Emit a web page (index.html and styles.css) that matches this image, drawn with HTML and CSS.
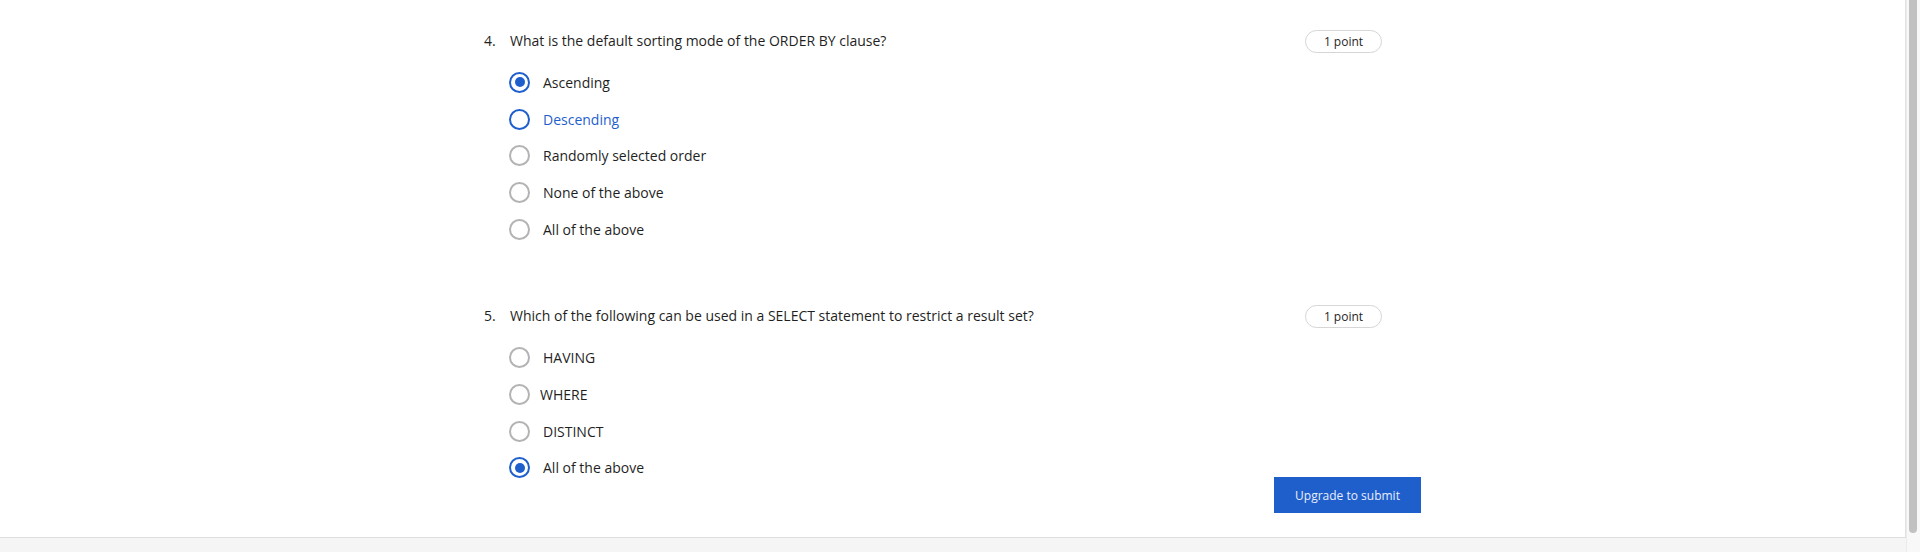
FILE: index.html
```html
<!DOCTYPE html>
<html lang="en">
<head>
<meta charset="utf-8">
<title>Quiz</title>
<link rel="stylesheet" href="styles.css">
</head>
<body>
<div class="viewport">
  <div class="main">
    <div class="panel">
      <div class="content">
        <section class="question q4">
          <div class="q-head">
            <span class="q-num">4.</span>
            <span class="q-text">What is the default sorting mode of the ORDER BY clause?</span>
            <span class="badge">1 point</span>
          </div>
          <ul class="options">
            <li class="option"><span class="radio checked"></span><span class="label">Ascending</span></li>
            <li class="option hover"><span class="radio"></span><span class="label">Descending</span></li>
            <li class="option"><span class="radio"></span><span class="label">Randomly selected order</span></li>
            <li class="option"><span class="radio"></span><span class="label">None of the above</span></li>
            <li class="option"><span class="radio"></span><span class="label">All of the above</span></li>
          </ul>
        </section>
        <section class="question q5">
          <div class="q-head">
            <span class="q-num">5.</span>
            <span class="q-text">Which of the following can be used in a SELECT statement to restrict a result set?</span>
            <span class="badge">1 point</span>
          </div>
          <div class="q-body">
            <ul class="options">
              <li class="option"><span class="radio"></span><span class="label">HAVING</span></li>
              <li class="option"><span class="radio"></span><span class="label tight">WHERE</span></li>
              <li class="option"><span class="radio"></span><span class="label">DISTINCT</span></li>
              <li class="option"><span class="radio checked"></span><span class="label">All of the above</span></li>
            </ul>
            <button class="submit" type="button">Upgrade to submit</button>
          </div>
        </section>
      </div>
    </div>
  </div>
  <div class="scrollbar"><div class="thumb"></div></div>
</div>
</body>
</html>
```

FILE: styles.css
```css
* { box-sizing: border-box; }
html, body { margin: 0; padding: 0; }
body {
  font-family: "Open Sans", "Noto Sans", sans-serif;
  color: #1f1f1f;
  background: #f5f5f5;
  width: 1920px;
  height: 552px;
  overflow: hidden;
}
.viewport {
  display: flex;
  height: 552px;
}
.main {
  flex: 1;
  display: flex;
  flex-direction: column;
  background: #f5f5f5;
}
.panel {
  height: 538px;
  background: #fff;
  border-right: 1px solid #e2e2e2;
  border-bottom: 1px solid #dedede;
}
.content {
  margin-left: 484px;
  width: 937px;
  padding-top: 31px;
}
.q-head {
  display: flex;
  align-items: center;
  height: 20px;
  font-size: 14px;
  line-height: 20px;
}
.q-num { width: 26px; }
.q-text { flex: 1; }
.badge {
  width: 77px;
  height: 23px;
  margin-right: 39px;
  border: 1px solid #d6d6d6;
  border-radius: 12px;
  font-size: 12px;
  line-height: 21px;
  text-align: center;
  color: #1f1f1f;
}
.options {
  list-style: none;
  margin: 0;
  padding: 0 0 0 25px;
}
.q4 .options { padding-top: 13px; }
.option {
  display: flex;
  align-items: center;
  height: 36.7px;
  font-size: 14px;
}
.radio {
  width: 21px;
  height: 21px;
  border: 2px solid #b3b3b3;
  border-radius: 50%;
  flex: none;
  display: flex;
  align-items: center;
  justify-content: center;
}
.radio.checked, .option.hover .radio {
  border-color: #1f5fcc;
}
.radio.checked::after {
  content: "";
  width: 10px;
  height: 10px;
  border-radius: 50%;
  background: #1f5fcc;
}
.label { margin-left: 13px; }
.label.tight { margin-left: 10px; }
.option.hover .label { color: #1f5fcc; }
.q5 { margin-top: 59px; }
.q-body {
  display: flex;
  justify-content: space-between;
  align-items: flex-end;
  padding-top: 13px;
}
.q5 .options { padding-bottom: 27px; }
.submit {
  width: 147px;
  height: 36px;
  border: 0;
  border-radius: 0;
  background: #1f5fcc;
  color: #e8eefa;
  font-family: "Open Sans", "Noto Sans", sans-serif;
  font-size: 12px;
  padding: 0;
  margin-bottom: 0;
}
.scrollbar {
  width: 14px;
  height: 552px;
  background: #f8f8f8;
  border-left: 1px solid #ebebeb;
  padding-left: 2px;
}
.thumb {
  width: 8px;
  height: 533px;
  background: #c1c1c1;
  border-radius: 0 0 4px 4px;
}
```
